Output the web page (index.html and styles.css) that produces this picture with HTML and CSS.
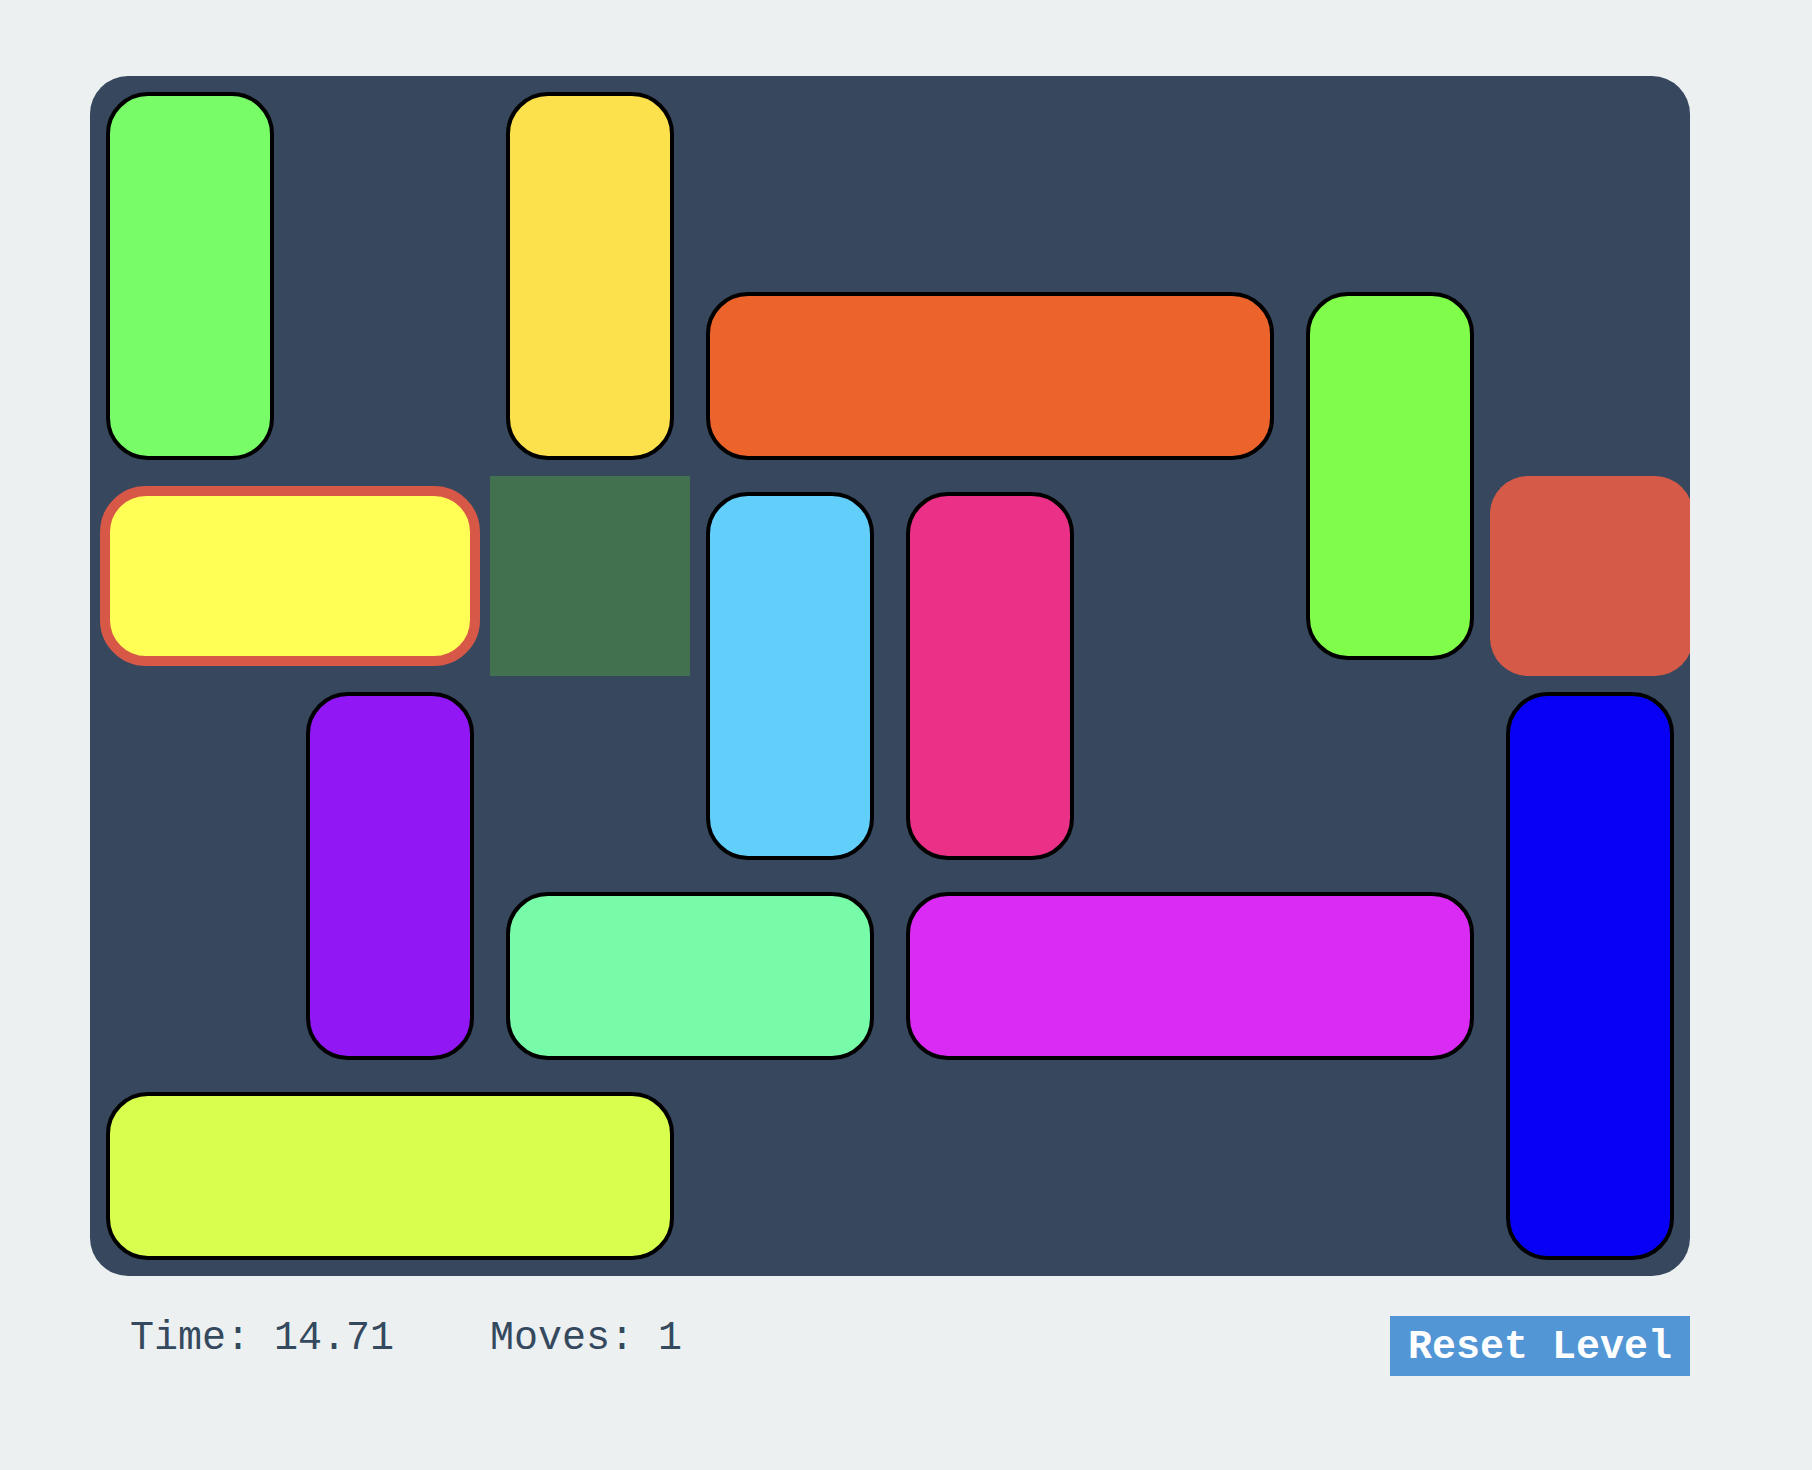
FILE: index.html
```html
<!DOCTYPE html>
<html lang="en">
<head>
<meta charset="utf-8">
<title>Unblock</title>
<link rel="stylesheet" href="styles.css">
</head>
<body>
<main class="game">
  <div class="board">
    <div class="block green-a pos-a"></div>
    <div class="block yellow pos-b"></div>
    <div class="block orange pos-c"></div>
    <div class="block green-b pos-d"></div>
    <div class="exit"></div>
    <div class="player"></div>
    <div class="hint"></div>
    <div class="block sky pos-e"></div>
    <div class="block pink pos-f"></div>
    <div class="block purple pos-g"></div>
    <div class="block mint pos-h"></div>
    <div class="block magenta pos-i"></div>
    <div class="block blue pos-j"></div>
    <div class="block lime pos-k"></div>
  </div>
  <div class="footer">
    <div class="stats">
      <span class="stat">Time: 14.71</span>
      <span class="stat">Moves: 1</span>
    </div>
    <button class="reset">Reset Level</button>
  </div>
</main>
</body>
</html>
```

FILE: styles.css
```css
html, body {
  margin: 0;
  padding: 0;
  background: #ecf0f1;
}

.game {
  padding: 76px 0 0 90px;
  width: 1600px;
}

.board {
  display: grid;
  grid-template-columns: repeat(8, 200px);
  grid-template-rows: repeat(6, 200px);
  width: 1600px;
  height: 1200px;
  background: #37485e;
  border-radius: 38px;
  overflow: hidden;
}

.block {
  margin: 16px;
  border: 4px solid #000;
  border-radius: 42px;
}

.pos-a { grid-area: 1 / 1 / 3 / 2; }
.pos-b { grid-area: 1 / 3 / 3 / 4; }
.pos-c { grid-area: 2 / 4 / 3 / 7; }
.pos-d { grid-area: 2 / 7 / 4 / 8; }
.pos-e { grid-area: 3 / 4 / 5 / 5; }
.pos-f { grid-area: 3 / 5 / 5 / 6; }
.pos-g { grid-area: 4 / 2 / 6 / 3; }
.pos-h { grid-area: 5 / 3 / 6 / 5; }
.pos-i { grid-area: 5 / 5 / 6 / 8; }
.pos-j { grid-area: 4 / 8 / 7 / 9; }
.pos-k { grid-area: 6 / 1 / 7 / 4; }

.green-a { background: #78fd68; }
.yellow { background: #fce04c; }
.orange { background: #ec632c; }
.green-b { background: #80fc4a; }
.sky { background: #62cefa; }
.pink { background: #eb3187; }
.purple { background: #9117f5; }
.mint { background: #78fba9; }
.magenta { background: #da2bf5; }
.blue { background: #0800f5; }
.lime { background: #d9ff4e; }

.exit {
  grid-area: 3 / 8 / 4 / 9;
  margin-right: -3px;
  background: #d65a48;
  border-radius: 38px;
}

.hint {
  grid-area: 3 / 3 / 4 / 4;
  background: #41714e;
}

.player {
  grid-area: 3 / 1 / 4 / 3;
  margin: 10px;
  border: 10px solid #d85848;
  border-radius: 46px;
  background: #ffff55;
}

.footer {
  display: flex;
  justify-content: space-between;
  align-items: flex-start;
  margin-top: 40px;
  font-family: "Liberation Mono", "Courier New", monospace;
  font-size: 40px;
}

.stats {
  display: flex;
  gap: 96px;
  padding-left: 40px;
  color: #34495e;
  line-height: normal;
}

.reset {
  box-sizing: border-box;
  height: 60px;
  padding: 9px 18px 0;
  border: none;
  border-radius: 0;
  background: #5296d6;
  color: #fff;
  font-family: inherit;
  font-size: 40px;
  font-weight: bold;
  line-height: normal;
  display: flex;
  align-items: flex-start;
}
```
